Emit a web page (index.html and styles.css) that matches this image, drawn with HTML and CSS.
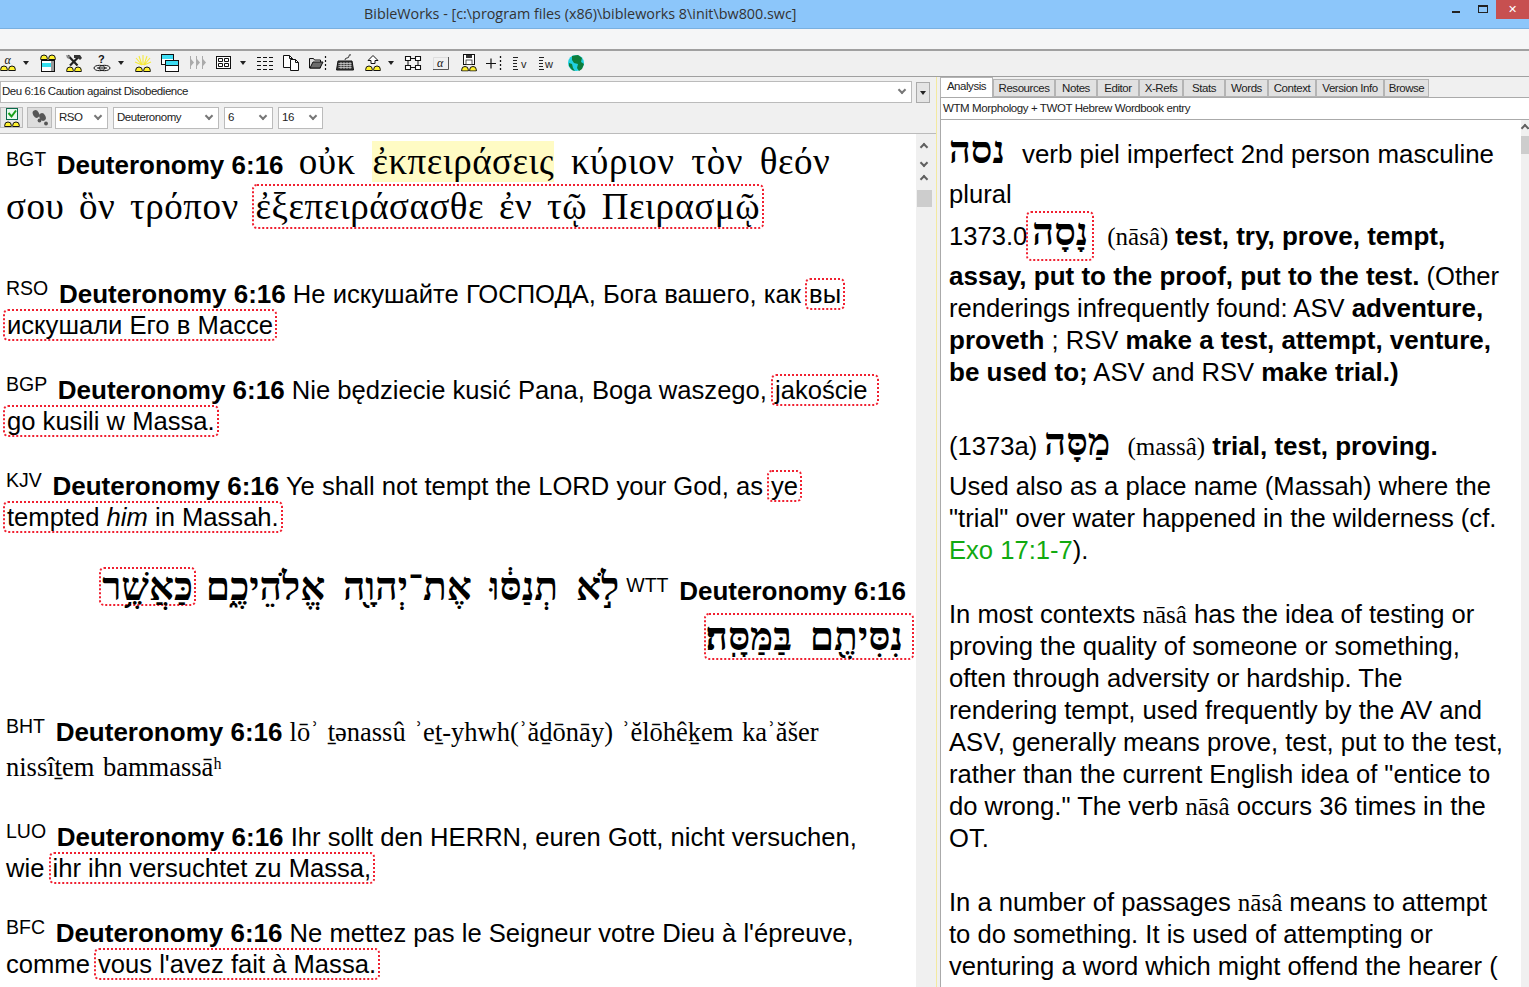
FILE: index.html
```html
<!DOCTYPE html>
<html lang="en">
<head>
<meta charset="utf-8">
<title>BibleWorks</title>
<link rel="stylesheet" href="styles.css">
</head>
<body>
<svg class="defs" width="0" height="0" aria-hidden="true">
  <symbol id="arcs" viewBox="0 0 16 6">
    <path d="M.7 5.500V4.300a3.300 3.300 0 0 1 6.600 0v1.200zM8.700 5.500V4.300a3.300 3.300 0 0 1 6.600 0v1.200z" fill="#fff22e" stroke="#111" stroke-width="1"/>
  </symbol>
</svg>
<div class="app">
  <header class="titlebar">
    <span class="title">BibleWorks - [c:\program files (x86)\bibleworks 8\init\bw800.swc]</span>
    <div class="winbtns">
      <span class="min"></span>
      <span class="max"></span>
      <span class="close">✕</span>
    </div>
  </header>
  <div class="menubar"></div>
  <div class="toolbar">
    <span class="ico g0"><svg viewBox="0 0 18 18"><text x="5.500" y="9.500" class="alpha">α</text><use href="#arcs" x="1" y="11" width="16" height="6"/></svg></span>
    <span class="drop d1"></span>
    <span class="ico g1"><svg viewBox="0 0 18 18"><use href="#arcs" x="1" y="0" width="16" height="6"/><rect x="2.500" y="6.500" width="13" height="11" fill="#fff" stroke="#111"/><rect x="3" y="9" width="9" height="4" fill="#35dfee"/><rect x="12" y="7" width="3" height="10" fill="#999"/></svg></span>
    <span class="ico g2"><svg viewBox="0 0 18 18"><path d="M3 1.500l9.500 10M14.500 2l-9.500 9.500" stroke="#222" stroke-width="2.200"/><path d="M9 1h6l2 3-2 2-2-2H9z" fill="#333"/><path d="M1 1l4 1-1 3-2-1z" fill="#888"/><use href="#arcs" x="1" y="12" width="16" height="6"/></svg></span>
    <span class="ico g3"><svg viewBox="0 0 18 18"><text x="5" y="9" class="qm">?</text><g fill="none" stroke="#111"><ellipse cx="6.500" cy="14" rx="5.500" ry="2.700"/><ellipse cx="11.500" cy="14" rx="5.500" ry="2.700"/></g><path d="M4 14h10" stroke="#111"/></svg></span>
    <span class="drop d2"></span>
    <span class="ico g4"><svg viewBox="0 0 18 18"><path d="M9 1v10M5 2l3 9M13 2l-3 9M2 4l6 7M16 4l-6 7M1 8l7 3M17 8l-7 3" stroke="#f6ea3c" stroke-width="1.100"/><use href="#arcs" x="1" y="12" width="16" height="6"/></svg></span>
    <span class="ico g5"><svg viewBox="0 0 18 18"><rect x=".5" y=".5" width="12" height="10" fill="#fff" stroke="#111"/><rect x="1" y="1" width="11" height="4" fill="#3ddcf2"/><rect x="4.500" y="6.500" width="13" height="11" fill="#fff" stroke="#111"/><rect x="5" y="7" width="12" height="4" fill="#3ddcf2"/><path d="M5 11.500h12" stroke="#111"/></svg></span>
    <span class="ico g6"><svg viewBox="0 0 18 18"><path d="M2.500 2v13M8.500 2v13M14.500 2v13" stroke="#aaa"/><path d="M3 5l3 3.500L3 12zM9 5l3 3.500L9 12zM15 5l3 3.500-3 3.500z" fill="#aaa"/></svg></span>
    <span class="ico g7"><svg viewBox="0 0 18 18"><rect x="1.500" y="2.500" width="14" height="12" fill="#fff" stroke="#111"/><path d="M3.500 4.500h4v3h-4zM9.500 4.500h4v3h-4zM3.500 9.500h4v3h-4zM9.500 9.500h4v3h-4z" fill="#fff" stroke="#111"/></svg></span>
    <span class="drop d3"></span>
    <span class="ico g8"><svg viewBox="0 0 18 18"><path d="M1 3.500h4M7 3.500h4M13 3.500h4M1 7.500h4M7 7.500h4M13 7.500h4M1 11.500h4M7 11.500h4M13 11.500h4M1 15.500h4M7 15.500h4M13 15.500h4" stroke="#111"/></svg></span>
    <span class="ico g9"><svg viewBox="0 0 18 18"><path d="M1.500 1.500h6l3 3v9h-9z" fill="#fff" stroke="#111"/><path d="M8.500 5.500h5l3 3v8h-8z" fill="#fff" stroke="#111"/><path d="M7.500 1.500v3h3M13.500 5.500v3h3" fill="none" stroke="#111"/></svg></span>
    <span class="ico g10"><svg viewBox="0 0 18 18"><path d="M.5 4.500h4l1 1.500h6v8H.5z" fill="#ddd" stroke="#111"/><path d="M1 14l3-6h10l-3 6z" fill="#6b6b6b" stroke="#111"/><path d="M16.500 2v2M16.500 6v2M16.500 10v2M16.500 14v2" stroke="#111" stroke-width="1.200"/></svg></span>
    <span class="ico g11"><svg viewBox="0 0 18 18"><path d="M9 6q0-2 2-2t2-2 2-1" fill="none" stroke="#333"/><path d="M2 7h14l1.500 9H.5z" fill="#3a3a3a" stroke="#111"/><path d="M2.500 9.500h13M2.500 11.500h13M2.500 13.500h13M5 8v7M8 8v7M11 8v7M14 8v7" stroke="#ddd" stroke-width=".7"/></svg></span>
    <span class="ico g12"><svg viewBox="0 0 18 18"><path d="M9 1.500l5 5h-3v3H7v-3H4z" fill="#fff" stroke="#111"/><use href="#arcs" x="1" y="11" width="16" height="6"/></svg></span>
    <span class="drop d4"></span>
    <span class="ico g13"><svg viewBox="0 0 18 18"><path d="M1.500 2.500h5v4h-5zM11.500 2.500h5v4h-5zM1.500 11.500h5v4h-5zM11.500 11.500h5v4h-5z" fill="#fff" stroke="#111" stroke-width="1.100"/><path d="M6.500 4.500h5M6.500 13.500h5M4 6.500v5M14 6.500v5" stroke="#111"/></svg></span>
    <span class="ico g14"><svg viewBox="0 0 18 18"><path d="M1.500 16.500v-13h15" fill="none" stroke="#ddd"/><path d="M1 15.500h15.500V3" fill="none" stroke="#555"/><text x="5" y="12.500" class="alpha">α</text></svg></span>
    <span class="ico g15"><svg viewBox="0 0 18 18"><rect x="3.500" y=".5" width="11" height="10" fill="#fff" stroke="#111"/><rect x="6" y="1" width="6" height="3" fill="#333"/><rect x="6" y="6" width="6" height="4.500" fill="#fff" stroke="#111" stroke-width=".7"/><use href="#arcs" x="1" y="11.500" width="16" height="6"/></svg></span>
    <span class="ico g16"><svg viewBox="0 0 18 18"><path d="M1 9.500h10M6 4.500v10" stroke="#111" stroke-width="1.200"/><path d="M15.500 2v2M15.500 6v2M15.500 10v2M15.500 14v2" stroke="#111" stroke-width="1.300"/></svg></span>
    <span class="ico g17"><svg viewBox="0 0 18 18"><path d="M1 3.500h5M1 6.500h4M1 9.500h4M1 12.500h4M1 15.500h5" stroke="#222"/><text x="9" y="14" class="mini">v</text></svg></span>
    <span class="ico g18"><svg viewBox="0 0 18 18"><path d="M1 3.500h5M1 6.500h4M1 9.500h4M1 12.500h4M1 15.500h5" stroke="#222"/><text x="7" y="14" class="mini">w</text></svg></span>
    <span class="ico g19"><svg viewBox="0 0 18 18"><circle cx="9" cy="9" r="8" fill="#20d0e0"/><path d="M5 2l6-1 4 3-1 4 3 2-2 5-3 2-2-3 1-4-4-1-2-3zM2 9l3 1 1 4 2 3-3-1-3-4z" fill="#0e7d3a"/></svg></span>
  </div>
  <main class="panes">
    <section class="left">
      <div class="notice">
        <div class="combo wide"><span>Deu 6:16 Caution against Disobedience</span><i class="chev"></i></div>
        <button class="blackdrop" type="button"><span></span></button>
      </div>
      <div class="selectors">
        <span class="tbtn"><svg viewBox="0 0 16 20" width="16" height="20"><rect x="2.500" y=".5" width="11" height="11" fill="#e8f8ef" stroke="#0a6b4a"/><path d="M4.500 5l3 3.500 4.500-6" fill="none" stroke="#16a016" stroke-width="2"/><use href="#arcs" x="0" y="13" width="16" height="6"/></svg></span>
        <span class="tbtn gray"><svg viewBox="0 0 20 20" width="20" height="20"><g fill="#555"><ellipse cx="6" cy="6" rx="3" ry="4" transform="rotate(-30 6 6)"/><ellipse cx="9.500" cy="12.500" rx="1.900" ry="1.900"/><ellipse cx="12.500" cy="9" rx="3" ry="4" transform="rotate(-30 12.500 9)"/><ellipse cx="16" cy="15.500" rx="1.900" ry="1.900"/></g></svg></span>
        <div class="combo c-rso"><span>RSO</span><i class="chev"></i></div>
        <div class="combo c-book"><span>Deuteronomy</span><i class="chev"></i></div>
        <div class="combo c-six"><span>6</span><i class="chev"></i></div>
        <div class="combo c-sixteen"><span>16</span><i class="chev"></i></div>
      </div>
      <div class="viewer">
        <article class="text-col">
          <p class="v" id="bgt"><sup class="ver">BGT</sup> <b class="ref">Deuteronomy 6:16</b> <span class="greek">οὐκ <mark>ἐκπειράσεις</mark> κύριον τὸν θεόν<br><span class="gline">σου ὃν τρόπον <span class="box">ἐξεπειράσασθε ἐν τῷ Πειρασμῷ</span></span></span></p>
          <p class="v" id="rso"><sup class="ver">RSO</sup> <b class="ref">Deuteronomy 6:16</b> Не искушайте ГОСПОДА, Бога вашего, как <span class="box">вы</span><br><span class="box">искушали Его в Массе</span></p>
          <p class="v" id="bgp"><sup class="ver">BGP</sup> <b class="ref">Deuteronomy 6:16</b> Nie będziecie kusić Pana, Boga waszego, <span class="box">jakoście&nbsp;</span><br><span class="box">go kusili w Massa.</span></p>
          <p class="v" id="kjv"><sup class="ver">KJV</sup> <b class="ref">Deuteronomy 6:16</b> Ye shall not tempt the LORD your God, as <span class="box">ye</span><br><span class="box">tempted <i>him</i> in Massah.</span></p>
          <p class="v" id="wtt" dir="rtl"><b class="ref" dir="ltr">Deuteronomy 6:16</b> <sup class="ver" dir="ltr">WTT</sup> <span class="heb">לֹ֣א תְנַסּ֔וּ אֶת־יְהוָ֖ה אֱלֹהֵיכֶ֑ם <span class="box hb1">כַּאֲשֶׁ֥ר</span><br><span class="box hb2">נִסִּיתֶ֖ם בַּמַּסָּֽה׃</span></span></p>
          <p class="v" id="bht"><sup class="ver">BHT</sup> <b class="ref">Deuteronomy 6:16</b> <span class="latin">lōʾ ṯənassû ʾeṯ-yhwh(ʾăḏōnāy) ʾĕlōhêḵem kaʾăšer<br>nissîṯem bammassāʰ</span></p>
          <p class="v" id="luo"><sup class="ver">LUO</sup> <b class="ref">Deuteronomy 6:16</b> Ihr sollt den HERRN, euren Gott, nicht versuchen,<br>wie <span class="box">ihr ihn versuchtet zu Massa,</span></p>
          <p class="v" id="bfc"><sup class="ver">BFC</sup> <b class="ref">Deuteronomy 6:16</b> Ne mettez pas le Seigneur votre Dieu à l'épreuve,<br>comme <span class="box">vous l'avez fait à Massa.</span></p>
        </article>
        <div class="scroll-left">
          <i class="up"></i><i class="dn"></i><i class="up"></i><b class="thumb"></b>
        </div>
      </div>
    </section>
    <section class="right">
      <nav class="tabs">
        <span class="tab active">Analysis</span>
        <span class="tab t-res">Resources</span>
        <span class="tab t-not">Notes</span>
        <span class="tab t-edi">Editor</span>
        <span class="tab t-xre">X-Refs</span>
        <span class="tab t-sta">Stats</span>
        <span class="tab t-wor">Words</span>
        <span class="tab t-con">Context</span>
        <span class="tab t-ver">Version Info</span>
        <span class="tab t-bro">Browse</span>
      </nav>
      <div class="subhead">WTM Morphology + TWOT Hebrew Wordbook entry</div>
      <div class="analysis">
        <article class="an-text">
          <p class="first">
            <span class="ln"><span class="heb-lg">נסה</span> <span class="sp">verb piel imperfect 2nd person masculine</span></span>
            <span class="ln m8">plural</span>
            <span class="ln m10">1373.0<span class="box boxlg"><span class="heb-lg">נָסָה</span></span> <span class="latin">(nāsâ)</span> <b>test, try, prove, tempt,</b></span>
            <span class="ln m8"><b>assay, put to the proof, put to the test.</b> (Other</span>
            <span class="ln">renderings infrequently found: ASV <b>adventure,</b></span>
            <span class="ln"><b>proveth</b> ; RSV <b>make a test, attempt, venture,</b></span>
            <span class="ln"><b>be used to;</b> ASV and RSV <b>make trial.)</b></span>
          </p>
          <p class="second">
            <span class="ln">(1373a) <span class="heb-lg">מַסָּה</span> <span class="latin sp2">(massâ)</span> <b>trial, test, proving.</b></span>
            <span class="ln m8">Used also as a place name (Massah) where the</span>
            <span class="ln">"trial" over water happened in the wilderness (cf.</span>
            <span class="ln"><span class="xref">Exo 17:1-7</span>).</span>
          </p>
          <p class="body-p">In most contexts <span class="latin">nāsâ</span> has the idea of testing or<br>proving the quality of someone or something,<br>often through adversity or hardship. The<br>rendering tempt, used frequently by the AV and<br>ASV, generally means prove, test, put to the test,<br>rather than the current English idea of "entice to<br>do wrong." The verb <span class="latin">nāsâ</span> occurs 36 times in the<br>OT.</p>
          <p class="body-p">In a number of passages <span class="latin">nāsâ</span> means to attempt<br>to do something. It is used of attempting or<br>venturing a word which might offend the hearer (</p>
        </article>
        <div class="scroll-right"><i class="up"></i><b class="thumb"></b></div>
      </div>
    </section>
  </main>
</div>
</body>
</html>
```
FILE: styles.css
```css
* { box-sizing: border-box; }
html, body { margin: 0; height: 100%; overflow: hidden; }
body { font-family: "Liberation Sans", Arial, sans-serif; color: #000; background: #f0f0f0; }
.defs { position: absolute; }
.app { width: 1529px; height: 987px; display: flex; flex-direction: column; overflow: hidden; }

.titlebar { height: 29px; background: #8cc6fa; border-bottom: 1px solid #79b0e0; display: flex; flex: none; }
.title { font-family: "Open Sans", sans-serif; font-size: 14.350px; color: #333; margin: 4px 0 0 364px; white-space: nowrap; }
.winbtns { margin-left: auto; display: flex; align-items: flex-start; }
.min { width: 8px; height: 2px; background: #222; margin: 11px 18px 0 0; }
.max { width: 10px; height: 8px; border: 1px solid #222; border-top-width: 2px; margin: 5px 8px 0 0; }
.close { width: 33px; height: 19px; background: #c75050; color: #fff; font-size: 11px; line-height: 19px; text-align: center; }
.menubar { height: 22px; background: #f5f6f7; flex: none; border-bottom: 2px solid #a0a0a0; }

.toolbar { height: 26px; flex: none; background: #f0f0f0; border-bottom: 1px solid #a0a0a0; display: flex; align-items: center; padding-bottom: 2px; }
.ico { width: 18px; height: 18px; display: block; flex: none; }
.ico svg { width: 100%; height: 100%; display: block; }
.alpha { font: italic 12px "Liberation Serif", serif; fill: #111; }
.qm { font: 700 11px "Liberation Sans", sans-serif; fill: #111; }
.mini { font: 11px "Liberation Sans", sans-serif; fill: #222; }
.drop { width: 0; height: 0; border: 3.500px solid transparent; border-top: 4px solid #222; border-bottom: 0; flex: none; }
.g0 { margin-left: -1px; }
.d1 { margin-left: 6px; } .g1 { margin-left: 10px; } .g2 { margin-left: 8px; } .g3 { margin-left: 10px; }
.d2 { margin-left: 7px; } .g4 { margin-left: 10px; } .g5 { margin-left: 9px; } .g6 { margin-left: 9px; }
.g7 { margin-left: 9px; } .d3 { margin-left: 7px; } .g8 { margin-left: 10px; } .g9 { margin-left: 8px; }
.g10 { margin-left: 9px; } .g11 { margin-left: 9px; } .g12 { margin-left: 10px; } .d4 { margin-left: 6px; }
.g13 { margin-left: 10px; } .g14 { margin-left: 10px; } .g15 { margin-left: 10px; } .g16 { margin-left: 7px; }
.g17 { margin-left: 9px; } .g18 { margin-left: 8px; } .g19 { margin-left: 11px; }

.panes { flex: 1; display: flex; min-height: 0; }
.left { width: 937px; flex: none; display: flex; flex-direction: column; border-right: 1px solid #f3e9a0; }
.right { flex: 1; min-width: 0; display: flex; flex-direction: column; margin-left: 3px; }

.notice { height: 26px; display: flex; align-items: flex-start; padding-top: 4px; gap: 4px; flex: none; }
.combo { height: 22px; background: #fff; border: 1px solid #bbb; display: flex; align-items: center; justify-content: space-between; font-size: 11.500px; letter-spacing: -.45px; color: #222; padding: 0 4px 2px 3px; flex: none; }
.combo span { display: block; }
.combo.wide { width: 912px; padding-left: 1px; }
.chev { width: 6px; height: 6px; border: solid #777; border-width: 0 2px 2px 0; transform: rotate(45deg); margin: 0 2px 2px 0; display: block; }
.blackdrop { width: 14px; height: 21px; margin: 1px 0 0; padding: 0; border: 1px solid #aaa; background: #e4e4e4; display: flex; align-items: center; justify-content: center; }
.blackdrop span { width: 0; height: 0; border: 3.500px solid transparent; border-top: 4px solid #222; border-bottom: 0; }
.selectors { height: 31px; border-bottom: 1px solid #bbb; display: flex; align-items: flex-start; gap: 5px; flex: none; padding-top: 4px; }
.tbtn { width: 23px; height: 21px; border: 1px solid #bbb; background: #e8e8e8; display: flex; align-items: center; justify-content: center; flex: none; margin-right: -1px; }
.tbtn.gray { background: #ddd; width: 25px; margin-right: -2px; }
.c-rso { width: 53px; }
.c-book { width: 106px; }
.c-six { width: 49px; }
.c-sixteen { width: 45px; }

.viewer { flex: 1; min-height: 0; display: flex; background: #fff; }
.text-col { flex: 1; min-width: 0; overflow: hidden; padding: 0 0 0 6px; font-size: 25.600px; line-height: 31px; white-space: nowrap; }
.scroll-left { width: 20px; flex: none; background: #f0f0f0; display: flex; flex-direction: column; align-items: center; padding: 5px 4px 0 0; }
.scroll-left .thumb { width: 15px; height: 17px; background: #cdcdcd; margin-top: 3px; display: block; }
.up, .dn { width: 6px; height: 6px; display: block; border: solid #606060; transform: rotate(45deg); margin: 5px 0; flex: none; }
.up { border-width: 2px 0 0 2px; }
.dn { border-width: 0 2px 2px 0; }

.v { margin: 0; }
.ver { font-size: 19.500px; line-height: 0; vertical-align: 8px; margin-right: 3.500px; }
.ref { font-weight: 700; font-size: 26px; }
.greek { font-family: "Liberation Serif", serif; font-size: 37px; word-spacing: 7px; letter-spacing: .5px; line-height: 0; margin-left: 8px; }
.gline { word-spacing: 5px; }
mark { background: #fffbc4; color: inherit; }
.box { border: 2px dotted #f02030; border-radius: 5px; padding: 0 2px; margin: 0 -3px; }
#bgt .box { margin-left: -2px; }
#bgt { line-height: 45px; padding-top: 8.500px; }
#rso { margin-top: 46px; }
#bgp { margin-top: 34px; }
#kjv { margin-top: 34px; }
#wtt { margin-top: 33px; line-height: 50px; text-align: right; padding-right: 10px; }
#bht { margin-top: 49px; line-height: 35px; }
#luo { margin-top: 37px; }
#bfc { margin-top: 34px; }
.heb { font-family: "Liberation Serif", "DejaVu Serif", serif; font-size: 39px; font-weight: 700; word-spacing: 8px; line-height: 0; }
.hb1 { display: inline-block; line-height: 35px; margin: 0 -8px 0 0; padding: 0 1px; }
.hb2 { margin-right: -8px; padding-left: 0; padding-right: 9px; }
.latin { font-family: "Liberation Serif", serif; font-size: 25px; line-height: 0; }
#bht .latin { font-size: 26.500px; word-spacing: 2px; line-height: 0; }

.tabs { height: 20px; display: flex; align-items: flex-end; flex: none; background: #f0f0f0; }
.tab { height: 18px; background: #e1e1e1; border: 1px solid #b4b4b4; font-size: 11.500px; letter-spacing: -.45px; line-height: 16px; text-align: center; color: #222; flex: none; white-space: nowrap; }
.tab.active { height: 20px; background: #fff; width: 53px; border-bottom: 0; line-height: 17px; }
.t-res { width: 62px; } .t-not { width: 42px; } .t-edi { width: 42px; } .t-xre { width: 44px; }
.t-sta { width: 42px; } .t-wor { width: 43px; } .t-con { width: 48px; } .t-ver { width: 68px; } .t-bro { width: 45px; }
.subhead { height: 23px; background: #fff; border: 1px solid #aaa; border-right: 0; font-size: 11.500px; letter-spacing: -.4px; line-height: 20px; padding-left: 2px; color: #222; flex: none; }
.analysis { flex: 1; min-height: 0; background: #fff; display: flex; border-left: 1px solid #aaa; }
.an-text { flex: 1; min-width: 0; overflow: hidden; padding: 18px 0 0 8px; font-size: 25.600px; line-height: 32px; white-space: nowrap; }
.an-text b { font-size: 26px; line-height: 0; }
.an-text p { margin: 0; }
.ln { display: block; }
.m8 { margin-top: 8px; }
.m10 { margin-top: 10px; }
.second { padding-top: 42px; }
.body-p { padding-top: 32px; }
.heb-lg { font-family: "Liberation Serif", "DejaVu Serif", serif; font-weight: 700; font-size: 38px; line-height: 0; }
.boxlg { display: inline-block; line-height: 46px; margin: -10px 6px -10px -1px; padding: 0 4px; vertical-align: baseline; }
.sp { margin-left: 10px; font-size: 25.900px; }
.sp2 { margin-left: 10px; }
.xref { color: #11aa11; }
.scroll-right { width: 8px; flex: none; background: #f0f0f0; display: flex; flex-direction: column; align-items: center; }
.scroll-right .thumb { width: 8px; height: 18px; background: #cdcdcd; margin-top: 0; display: block; }
```
